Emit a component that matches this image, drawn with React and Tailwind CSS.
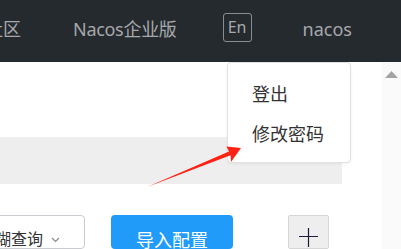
import React from 'react';

const cjk = { fontFamily: '"Noto Sans", "Noto Sans CJK SC", sans-serif' };

const Header = () => (
  <div className="h-[62px] bg-[#252a2f] flex items-center gap-[52px] text-[18px] text-[#a6a8aa] overflow-hidden pb-[3px]">
    <span className="-ml-[15px] whitespace-nowrap">社区</span>
    <span className="whitespace-nowrap tracking-[-0.3px]">Nacos企业版</span>
    <span className="-ml-[6px] w-[29px] h-[29px] border border-[#8a8d90] rounded-[3px] flex items-center justify-center text-[16px] mb-[5px]">En</span>
    <span className="whitespace-nowrap ml-[-1px]">nacos</span>
  </div>
);

const Dropdown = () => (
  <div className="absolute left-[227px] top-[62px] w-[124px] h-[101px] bg-white border border-[#e2e2e2] rounded-[4px] shadow-[0_1px_3px_rgba(0,0,0,0.06)] flex flex-col pl-[24px] pt-[18px] gap-[14px] text-[18px] text-[#333]">
    <div className="leading-[26px]">登出</div>
    <div className="leading-[26px]">修改密码</div>
  </div>
);

const Arrow = () => (
  <svg className="absolute left-0 top-0 pointer-events-none" width="401" height="249" viewBox="0 0 401 249">
    <polygon
      fill="#ff2214"
      points="147,187 229,151.5 226.5,146.5 241,148 231,162 230.5,155.2"
    />
  </svg>
);

export default function App() {
  return (
    <div className="relative w-[401px] h-[249px] overflow-hidden bg-white" style={cjk}>
      <Header />
      <div className="flex h-[187px]">
        <div className="flex-1 flex flex-col">
          <div className="h-[80px]" />
          <div className="h-[50px] w-[342px] bg-[#eeeeee]" />
          <div className="h-[33px]" />
          <div className="flex items-start">
            <div className="-ml-[36px] w-[121px] h-[34px] border border-[#c9cbd0] rounded-[4px] flex items-center pl-[14px] text-[16px] text-[#333] whitespace-nowrap">
              <span className="mt-[13px]">模糊查询</span>
              <svg className="ml-[8px] mt-[16px]" width="9" height="6" viewBox="0 0 9 6">
                <path d="M1 1 L4.5 4.5 L8 1" fill="none" stroke="#8a8a8a" strokeWidth="1.2" />
              </svg>
            </div>
            <div className="ml-[26px] w-[122px] h-[34px] bg-[#209bfa] rounded-[4px] flex justify-center pt-[12px] text-[18px] text-white">
              导入配置
            </div>
            <div className="ml-[55px] w-[41px] h-[34px] bg-[#eeeeee] border border-[#d6d6d6] rounded-[2px] flex justify-center pt-[12px]">
              <svg width="19" height="19" viewBox="0 0 19 19">
                <path d="M9.5 0 V19 M0 8.5 H19" stroke="#1c1c3a" strokeWidth="1.2" />
              </svg>
            </div>
          </div>
        </div>
        <div className="w-[19px] bg-[#fafafa] flex justify-center pt-[9px]">
          <svg width="13" height="8" viewBox="0 0 13 8">
            <polygon points="6.5,0 13,7 0,7" fill="#a3a3a3" />
          </svg>
        </div>
      </div>
      <Dropdown />
      <Arrow />
    </div>
  );
}
